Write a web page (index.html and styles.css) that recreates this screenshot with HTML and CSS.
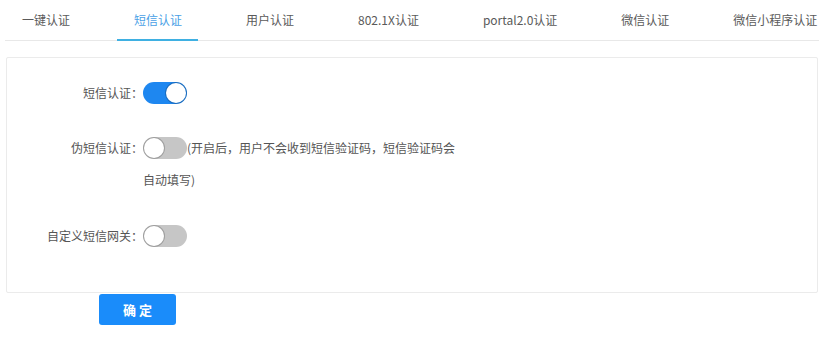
FILE: index.html
```html
<!DOCTYPE html>
<html lang="zh-CN">
<head>
<meta charset="utf-8">
<title>短信认证</title>
<link rel="stylesheet" href="styles.css">
</head>
<body>
<div class="page">
  <div class="tabs">
    <div class="tab">一键认证</div>
    <div class="tab active">短信认证</div>
    <div class="tab">用户认证</div>
    <div class="tab">802.1X认证</div>
    <div class="tab">portal2.0认证</div>
    <div class="tab">微信认证</div>
    <div class="tab">微信小程序认证</div>
  </div>
  <div class="panel">
    <div class="row">
      <div class="label">短信认证：</div>
      <div class="control"><span class="switch on"><span class="knob"></span></span></div>
    </div>
    <div class="row row2">
      <div class="label">伪短信认证：</div>
      <div class="control"><span class="switch"><span class="knob"></span></span><span class="desc">(开启后，用户不会收到短信验证码，短信验证码会自动填写)</span></div>
    </div>
    <div class="row row3">
      <div class="label">自定义短信网关：</div>
      <div class="control"><span class="switch"><span class="knob"></span></span></div>
    </div>
  </div>
  <button class="btn">确 定</button>
</div>
</body>
</html>
```
FILE: styles.css
```css
html, body {
  margin: 0;
  padding: 0;
  background: #fff;
}
.page {
  font-family: "Noto Sans CJK SC", "Noto Sans", sans-serif;
  color: #555;
}
.tabs {
  display: flex;
  gap: 32px;
  margin-left: 5px;
  padding-left: 1px;
  height: 40px;
  border-bottom: 1px solid #e8e8e8;
}
.tab {
  padding: 0 16px;
  font-size: 12px;
  line-height: 40px;
  color: #5a5a5a;
  white-space: nowrap;
  position: relative;
}
.tab.active {
  color: #4a9fe6;
}
.tab.active::after {
  content: "";
  position: absolute;
  left: -1px;
  right: 0;
  bottom: -1px;
  height: 2px;
  background: #3fb0e2;
}
.panel {
  margin: 16px 1px 0 6px;
  border: 1px solid #ebebeb;
  border-radius: 2px;
  padding: 19px 0 40px 0;
}
.row {
  display: flex;
  align-items: flex-start;
}
.row2 { margin-top: 23px; }
.row3 { margin-top: 24px; }
.label {
  flex: none;
  width: 136px;
  text-align: right;
  font-size: 12px;
  line-height: 32px;
  color: #555;
  white-space: nowrap;
}
.control {
  max-width: 318px;
  font-size: 12px;
  line-height: 32px;
  color: #555;
}
.switch {
  display: inline-block;
  vertical-align: top;
  margin-top: 5px;
  width: 44px;
  height: 22px;
  border-radius: 11px;
  background: #c6c6c6;
  position: relative;
}
.switch.on {
  background: #1e87f0;
}
.knob {
  position: absolute;
  top: 1px;
  left: 1px;
  width: 20px;
  height: 20px;
  border-radius: 50%;
  background: #fff;
  box-shadow: 0 0 0 1px rgba(0,0,0,0.2);
}
.switch.on .knob {
  left: 23px;
}
.btn {
  display: block;
  margin: 1px 0 0 99px;
  width: 77px;
  height: 31px;
  border: none;
  border-radius: 3px;
  background: #1a8cfa;
  color: #fff;
  font-family: "Noto Sans CJK SC", sans-serif;
  font-size: 13px;
  font-weight: bold;
  padding: 0;
}
```
